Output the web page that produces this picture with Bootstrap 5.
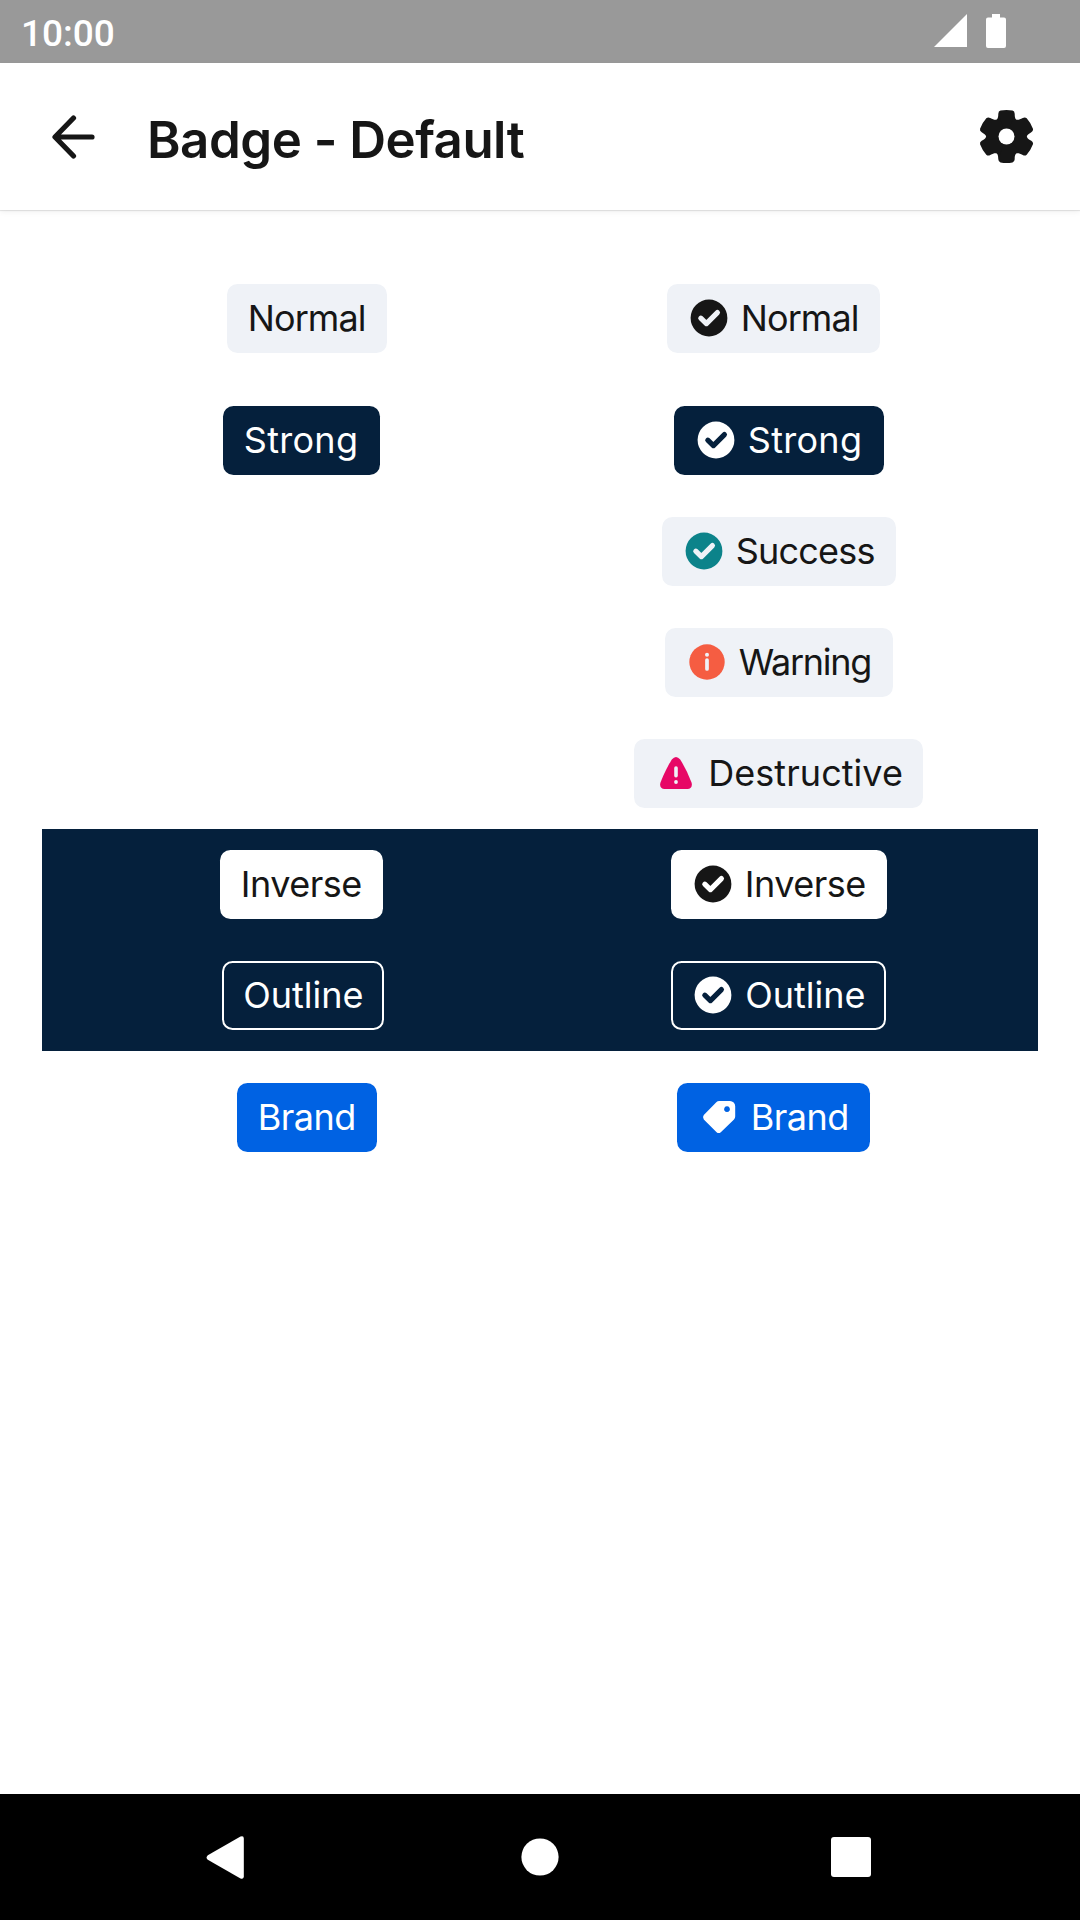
<!DOCTYPE html>
<html lang="en">
<head>
<meta charset="utf-8">
<meta name="viewport" content="width=device-width, initial-scale=1">
<title>Badge - Default</title>
<link href="https://cdn.jsdelivr.net/npm/bootstrap@5.3.0/dist/css/bootstrap.min.css" rel="stylesheet">
<style>
  :root { --ink: #161616; --navy: #05203c; --mist: #eff2f7; --brand-blue: #0062e3; }
  body { font-family: Inter, "Liberation Sans", sans-serif; color: var(--ink); background: #fff; }
  .screen { width: 1080px; height: 1920px; overflow: hidden; }
  .status-bar { height: 63px; background: #999; padding: 0 74px 0 21px; }
  .clock { font: 500 37px/63px Roboto, sans-serif; padding-top: 2px; }
  .status-icons { height: 63px; }
  .app-bar { height: 147px; padding: 0 47px 0 52px; box-shadow: 0 1px 1px rgba(0,0,0,.09), 0 2px 6px rgba(0,0,0,.06); }
  .app-title { font-size: 51px; line-height: 60px; font-weight: 600; letter-spacing: -.5px; margin: 6px 0 0 52px; }
  .gallery { padding: 42px; }
  .wide-inset { padding: 32px 31.5px; }
  .tight-inset { padding: 21px 20.5px; }
  .on-dark { background: var(--navy); }
  .tag { --tick: var(--mist); display: flex; align-items: center; height: 69px; padding: 0 21px; border-radius: 10.5px; font-size: 36px; line-height: 69px; font-weight: 400; white-space: nowrap; background: var(--mist); color: var(--ink); }
  .tag svg { flex: none; width: 42px; height: 42px; margin: -1px 11px 0 0; }
  .tag span { height: 70px; }
  .tick-line { fill: none; stroke: var(--tick); stroke-width: 5.2; stroke-linecap: round; stroke-linejoin: round; }
  .tag-strong { --tick: var(--navy); background: var(--navy); color: #fff; }
  .tag-inverse { --tick: #fff; background: #fff; }
  .tag-outline { --tick: var(--navy); background: transparent; color: #fff; box-shadow: inset 0 0 0 2px #fff; }
  .tag-brand { background: var(--brand-blue); color: #fff; }
  .t-normal { width: 118px; letter-spacing: -.9px; }
  .t-strong { width: 115px; letter-spacing: .3px; }
  .t-success { width: 139px; letter-spacing: -.8px; }
  .t-warning { width: 133px; letter-spacing: -1.3px; }
  .t-destructive { width: 194px; letter-spacing: .05px; }
  .t-inverse { width: 121px; letter-spacing: -.5px; }
  .t-outline { width: 120px; }
  .t-brand { width: 98px; letter-spacing: -.5px; }
  .nav-keys { height: 126px; background: #000; padding: 0 209px 0 206px; }
</style>
</head>
<body>
<svg class="d-none">
  <symbol id="check" viewBox="0 0 42 42">
    <circle cx="21" cy="21" r="18.400" fill="currentColor"/>
    <path class="tick-line" d="M12.800 21.200 18.400 26.600 29.400 15.600"/>
  </symbol>
</svg>
<div class="screen d-flex flex-column">
  <div class="status-bar d-flex justify-content-between text-white">
    <div class="clock">10:00</div>
    <svg class="status-icons" width="72" height="63" viewBox="934 0 72 63" fill="#fff">
      <path d="M934 47 967 14V47Z"/>
      <path d="M992 14h8v3.400h4a2 2 0 0 1 2 2V46a2 2 0 0 1-2 2h-16a2 2 0 0 1-2-2V19.400a2 2 0 0 1 2-2h4Z"/>
    </svg>
  </div>
  <header class="app-bar d-flex align-items-center">
    <svg width="43" height="44" viewBox="0 0 43 44" fill="none" stroke="#161616" stroke-width="5.200" stroke-linecap="round" stroke-linejoin="round"><path d="M40 22H3.500M21.500 3 3 22 21.500 41"/></svg>
    <h1 class="app-title">Badge - Default</h1>
    <svg class="ms-auto overflow-visible" width="53" height="53" viewBox="-26.500 -26.500 53 53" fill="#161616">
      <defs>
        <path id="tooth" d="M-12.500-14.500C-9-17-8.300-18-8.200-22.800Q-8.100-25.300-6-25.900Q0-27 6-25.900Q8.100-25.300 8.200-22.800C8.300-18 9-17 12.500-14.500L0 0Z"/>
      </defs>
      <circle r="18.500"/>
      <use href="#tooth"/><use href="#tooth" transform="scale(1.040 1) rotate(60)"/><use href="#tooth" transform="scale(1.040 1) rotate(120)"/><use href="#tooth" transform="rotate(180)"/><use href="#tooth" transform="scale(1.040 1) rotate(240)"/><use href="#tooth" transform="scale(1.040 1) rotate(300)"/>
      <circle r="8" fill="#fff"/>
    </svg>
  </header>
  <main class="gallery flex-grow-1">
    <div class="wide-inset">
      <div class="row g-0">
        <div class="col-6 d-flex justify-content-center"><div class="tag"><span class="t-normal">Normal</span></div></div>
        <div class="col-6 d-flex justify-content-center"><div class="tag"><svg><use href="#check"/></svg><span class="t-normal">Normal</span></div></div>
      </div>
    </div>
    <div class="tight-inset">
      <div class="row g-0">
        <div class="col-6 d-flex justify-content-center"><div class="tag tag-strong"><span class="t-strong">Strong</span></div></div>
        <div class="col-6 d-flex justify-content-center"><div class="tag tag-strong"><svg><use href="#check"/></svg><span class="t-strong">Strong</span></div></div>
      </div>
    </div>
    <div class="tight-inset">
      <div class="row g-0">
        <div class="col-6 offset-6 d-flex justify-content-center"><div class="tag"><svg color="#0c838a"><use href="#check"/></svg><span class="t-success">Success</span></div></div>
      </div>
    </div>
    <div class="tight-inset">
      <div class="row g-0">
        <div class="col-6 offset-6 d-flex justify-content-center"><div class="tag">
          <svg viewBox="0 0 42 42"><circle cx="21" cy="21" r="17.700" fill="#f55d42"/><circle cx="21" cy="13.700" r="2" fill="#eff2f7"/><path d="M21 19v9" stroke="#eff2f7" stroke-width="3.700" stroke-linecap="round"/></svg>
          <span class="t-warning">Warning</span></div></div>
      </div>
    </div>
    <div class="tight-inset">
      <div class="row g-0">
        <div class="col-6 offset-6 d-flex justify-content-center"><div class="tag">
          <svg viewBox="0 0 42 42"><path d="M16.800 7.400Q21 2.400 25.200 7.400 31.500 17.500 36.400 30.200C37.800 34 36 36.900 32.500 36.900H9.500C6 36.900 4.200 34 5.600 30.200 10.500 17.500 16.800 7.400 16.800 7.400Z" fill="#e70866"/><path d="M21 16v7.800" stroke="#eff2f7" stroke-width="3.600" stroke-linecap="round"/><circle cx="21" cy="30" r="1.900" fill="#eff2f7"/></svg>
          <span class="t-destructive">Destructive</span></div></div>
      </div>
    </div>
    <div class="on-dark">
      <div class="tight-inset">
        <div class="row g-0">
          <div class="col-6 d-flex justify-content-center"><div class="tag tag-inverse"><span class="t-inverse">Inverse</span></div></div>
          <div class="col-6 d-flex justify-content-center"><div class="tag tag-inverse"><svg><use href="#check"/></svg><span class="t-inverse">Inverse</span></div></div>
        </div>
      </div>
      <div class="tight-inset">
        <div class="row g-0">
          <div class="col-6 d-flex justify-content-center"><div class="tag tag-outline ms-1 me-n1"><span class="t-outline">Outline</span></div></div>
          <div class="col-6 d-flex justify-content-center"><div class="tag tag-outline"><svg><use href="#check"/></svg><span class="t-outline">Outline</span></div></div>
        </div>
      </div>
    </div>
    <div class="wide-inset">
      <div class="row g-0">
        <div class="col-6 d-flex justify-content-center"><div class="tag tag-brand"><span class="t-brand">Brand</span></div></div>
        <div class="col-6 d-flex justify-content-center"><div class="tag tag-brand">
          <svg viewBox="0 0 42 42"><path fill="#fff" fill-rule="evenodd" d="M18.300 6.200Q19.500 5 21.200 5H32a5.200 5.200 0 0 1 5.200 5.200V20.600Q37.200 22.300 36 23.500L22.800 36.200Q20.700 38 18.600 36.200L5.800 23.400Q4.100 21.200 5.800 19ZM29 10.300a2.900 2.900 0 1 0 .01 0Z"/></svg>
          <span class="t-brand">Brand</span></div></div>
      </div>
    </div>
  </main>
  <nav class="nav-keys d-flex align-items-center justify-content-between">
    <svg width="38" height="43" viewBox="0 0 38 43" fill="#fff"><path d="M1.800 19.200 34.500.6Q37.800-.6 37.800 2.400V40.600Q37.800 43.600 34.500 42.400L1.800 23.800Q-.6 21.500 1.800 19.200Z"/></svg>
    <svg class="ms-1" width="38" height="38" viewBox="0 0 38 38" fill="#fff"><circle cx="19" cy="19" r="18.600"/></svg>
    <svg width="40" height="40" viewBox="0 0 40 40" fill="#fff"><rect width="40" height="40" rx="3"/></svg>
  </nav>
</div>
<script src="https://cdn.jsdelivr.net/npm/bootstrap@5.3.0/dist/js/bootstrap.bundle.min.js"></script>
</body>
</html>
